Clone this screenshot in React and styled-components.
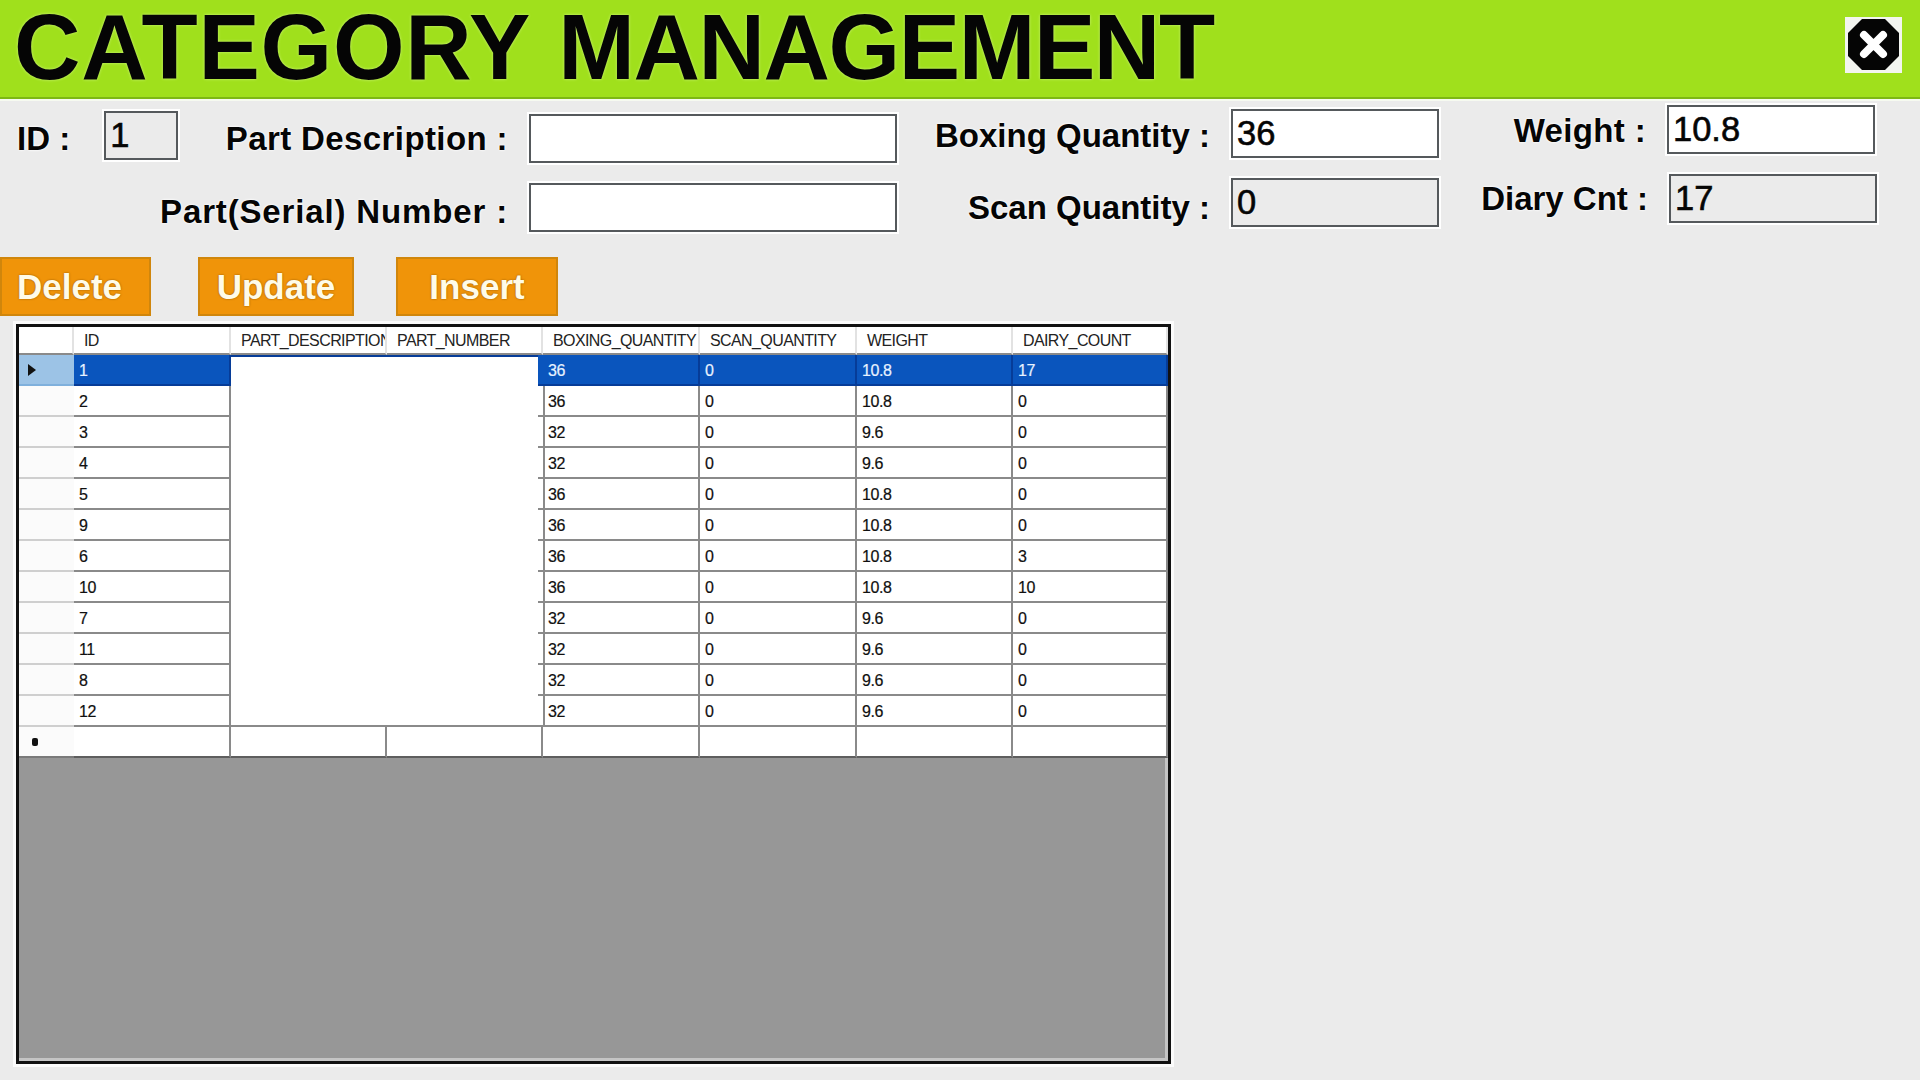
import React from "react";
import styled, { createGlobalStyle } from "styled-components";

const fullColumns = "55px 157px 156px 156px 157px 157px 156px 155px";
const dataColumns = "55px 157px 307px 162px 157px 156px 155px";

const rows = [
    [1, 36, 0, "10.8", 17],
    [2, 36, 0, "10.8", 0],
    [3, 32, 0, "9.6", 0],
    [4, 32, 0, "9.6", 0],
    [5, 36, 0, "10.8", 0],
    [9, 36, 0, "10.8", 0],
    [6, 36, 0, "10.8", 3],
    [10, 36, 0, "10.8", 10],
    [7, 32, 0, "9.6", 0],
    [11, 32, 0, "9.6", 0],
    [8, 32, 0, "9.6", 0],
    [12, 32, 0, "9.6", 0]
];

const columnTitles = [
    "ID",
    "PART_DESCRIPTION",
    "PART_NUMBER",
    "BOXING_QUANTITY",
    "SCAN_QUANTITY",
    "WEIGHT",
    "DAIRY_COUNT"
];

const GlobalStyle = createGlobalStyle`
    html, body {
        margin: 0;
        padding: 0;
        background: #ebebeb;
        overflow: hidden;
    }
    * {
        box-sizing: border-box;
    }
`;

const Page = styled.div`
    width: 1920px;
    height: 1080px;
    display: flex;
    flex-direction: column;
    background: #ebebeb;
    font-family: "Liberation Sans", Arial, sans-serif;
    color: #050505;
`;

const TitleBar = styled.header`
    height: 99px;
    flex-shrink: 0;
    display: flex;
    align-items: flex-start;
    justify-content: space-between;
    background: #a0e01c;
    border-bottom: 2px solid #7db814;
    box-shadow: 0 2px 0 #f6faf0;
    padding: 0 18px 0 14px;
`;

const Title = styled.h1`
    margin: 0;
    font-size: 92px;
    line-height: 94px;
    font-weight: 700;
    word-spacing: 1.5px;
    white-space: nowrap;
    color: #050505;
    text-shadow: 0 0 3px #cdf57e;
`;

const TitleWord = styled.span`
    letter-spacing: ${props => props.$spacing}px;
`;

const CloseButton = styled.button`
    width: 57px;
    height: 56px;
    margin-top: 17px;
    padding: 0;
    border: 0;
    display: block;
    background: #f3f5f0;
    svg {
        display: block;
    }
`;

const Form = styled.section`
    display: flex;
    height: 158px;
    flex-shrink: 0;
`;

const FieldColumn = styled.div`
    width: ${props => props.$width}px;
    padding-top: ${props => props.$top}px;
    display: flex;
    flex-direction: column;
    gap: 20px;
`;

const Field = styled.div`
    height: 49px;
    display: flex;
    align-items: center;
    justify-content: flex-end;
    gap: 21px;
    padding-right: ${props => props.$inset || 0}px;
`;

const Label = styled.label`
    font-size: 33px;
    font-weight: 700;
    white-space: nowrap;
    letter-spacing: ${props => props.$spacing || 0}px;
    margin-top: ${props => (props.$drop || 0) * 2}px;
    margin-left: ${props => props.$left || 0}px;
    text-shadow: 0 0 3px #ffffff, 0 0 2px #ffffff;
`;

const IdGroup = styled.div`
    display: flex;
    align-items: center;
    gap: 34px;
    margin-right: auto;
`;

const TextBox = styled.div`
    width: ${props => props.$width}px;
    height: 49px;
    flex-shrink: 0;
    display: flex;
    align-items: center;
    margin-top: ${props => (props.$lift || 0) * -2}px;
    padding-left: 4px;
    font-size: 34.5px;
    -webkit-text-stroke: 0.6px #050505;
    background: ${props => (props.$readOnly ? "#ebebeb" : "#ffffff")};
    border: 2px solid #55595c;
    box-shadow: 0 0 0 2px #ffffff;
`;

const ButtonRow = styled.div`
    height: 59px;
    flex-shrink: 0;
    display: flex;
`;

const ActionButton = styled.button`
    width: ${props => props.$width}px;
    margin-right: ${props => props.$after || 0}px;
    padding: 0 ${props => props.$pad || 0}px 0 0;
    border: 2px solid #d0860c;
    background: #f09409;
    color: #fffbe8;
    font-family: inherit;
    font-size: 35px;
    font-weight: 700;
    text-shadow: 0 0 2px #8a5200;
`;

const Grid = styled.div`
    width: 1155px;
    height: 740px;
    margin: 8px 0 0 16px;
    display: flex;
    flex-direction: column;
    background: #979797;
    border: 3px solid #111111;
    box-shadow: 0 0 0 3px #fbfbfb, inset -3px -3px 0 #c4c4c4;
`;

const GridRow = styled.div`
    display: grid;
    flex-shrink: 0;
    height: ${props => props.$height || 31}px;
    grid-template-columns: ${props => (props.$blank ? dataColumns : fullColumns)};
    background: #ffffff;
    font-size: 16px;
`;

const ColumnHead = styled.div`
    padding: 5px 0 0 ${props => (props.$corner ? 0 : 10)}px;
    overflow: hidden;
    white-space: nowrap;
    letter-spacing: -0.6px;
    color: #222222;
    border-right: 2px solid #e2e2e2;
    border-bottom: 2px solid #8a8a8a;
`;

const RowHead = styled.div`
    display: flex;
    align-items: center;
    padding-left: 8px;
    background: ${props => (props.$selected ? "#9cc3e6" : "#fbfbfb")};
    border-bottom: 2px solid ${props => (props.$selected ? "#7fb0dc" : "#cfcfcf")};
`;

const Dot = styled.span`
    width: 6px;
    height: 8px;
    margin-left: 5px;
    border-radius: 2px;
    background: #111111;
`;

const Cell = styled.div`
    position: relative;
    display: flex;
    align-items: center;
    padding: 2px 0 0 ${props => (props.$bleed ? 10 : 5)}px;
    letter-spacing: -0.4px;
    -webkit-text-stroke: 0.2px currentColor;
    color: ${props => (props.$selected ? "#e8f2ff" : "#101010")};
    background: ${props => (props.$selected ? "#0a55bd" : "#ffffff")};
    border-bottom: 2px solid ${props => (props.$selected ? "#063c98" : "#8a8a8a")};
    border-right: 2px solid ${props => (props.$selected ? "#063c98" : "#8a8a8a")};
    &::before {
        content: ${props => (props.$bleed && !props.$selected ? '""' : "none")};
        position: absolute;
        left: 5px;
        top: 0;
        bottom: -2px;
        width: 2px;
        background: #8a8a8a;
    }
`;

const BlankCell = styled.div`
    background: #ffffff;
    border-top: ${props => (props.$selected ? "2px solid #063c98" : "0")};
`;

const EmptyCell = styled.div`
    border-top: 2px solid #8a8a8a;
    border-right: 2px solid #8a8a8a;
    border-bottom: 2px solid #5e5e5e;
    margin-top: -2px;
`;

const NewRowHead = styled(RowHead)`
    border-bottom: 2px solid #7a7a7a;
`;

function CloseIcon() {
    return (
        <svg width="57" height="56" viewBox="0 0 57 56">
            <polygon
                points="17,2 40,2 54,16 54,39 40,53 17,53 3,39 3,16"
                fill="#050505"
            />
            <path
                d="M19 18 L38 37 M38 18 L19 37"
                stroke="#ffffff"
                strokeWidth="8"
                strokeLinecap="round"
            />
        </svg>
    );
}

function RowArrow() {
    return (
        <svg width="10" height="14" viewBox="0 0 10 14">
            <path d="M1 1 L9 7 L1 13 Z" fill="#111111" />
        </svg>
    );
}

const App = () => (
    <Page>
        <GlobalStyle />
        <TitleBar>
            <Title>
                <TitleWord $spacing={0.75}>CATEGORY</TitleWord>{" "}
                <TitleWord $spacing={-1.4}>MANAGEMENT</TitleWord>
            </Title>
            <CloseButton aria-label="Close">
                <CloseIcon />
            </CloseButton>
        </TitleBar>
        <Form>
            <FieldColumn $width={897} $top={15}>
                <Field>
                    <IdGroup>
                        <Label $left={17}>ID :</Label>
                        <TextBox $width={74} $lift={3} $readOnly>
                            1
                        </TextBox>
                    </IdGroup>
                    <Label $spacing={0.4}>Part Description :</Label>
                    <TextBox $width={368} />
                </Field>
                <Field>
                    <Label $spacing={0.85} $drop={4}>
                        Part(Serial) Number :
                    </Label>
                    <TextBox $width={368} />
                </Field>
            </FieldColumn>
            <FieldColumn $width={542} $top={10}>
                <Field>
                    <Label $drop={2}>Boxing Quantity :</Label>
                    <TextBox $width={208}>36</TextBox>
                </Field>
                <Field>
                    <Label $drop={5}>Scan Quantity :</Label>
                    <TextBox $width={208} $readOnly>
                        0
                    </TextBox>
                </Field>
            </FieldColumn>
            <FieldColumn $width={438} $top={6}>
                <Field $inset={2}>
                    <Label $spacing={0.35} $drop={1}>
                        Weight :
                    </Label>
                    <TextBox $width={208}>10.8</TextBox>
                </Field>
                <Field>
                    <Label>Diary Cnt :</Label>
                    <TextBox $width={208} $readOnly>
                        17
                    </TextBox>
                </Field>
            </FieldColumn>
        </Form>
        <ButtonRow>
            <ActionButton $width={151} $after={47} $pad={12}>
                Delete
            </ActionButton>
            <ActionButton $width={156} $after={42}>
                Update
            </ActionButton>
            <ActionButton $width={162}>Insert</ActionButton>
        </ButtonRow>
        <Grid>
            <GridRow $height={28}>
                <ColumnHead $corner />
                {columnTitles.map(title => (
                    <ColumnHead key={title}>{title}</ColumnHead>
                ))}
            </GridRow>
            {rows.map(([id, boxing, scan, weight, diary], index) => {
                const selected = index === 0;
                return (
                    <GridRow key={id} $blank>
                        <RowHead $selected={selected}>
                            {selected && <RowArrow />}
                        </RowHead>
                        <Cell $selected={selected}>{id}</Cell>
                        <BlankCell $selected={selected} />
                        <Cell $selected={selected} $bleed>
                            {boxing}
                        </Cell>
                        <Cell $selected={selected}>{scan}</Cell>
                        <Cell $selected={selected}>{weight}</Cell>
                        <Cell $selected={selected}>{diary}</Cell>
                    </GridRow>
                );
            })}
            <GridRow>
                <NewRowHead>
                    <Dot />
                </NewRowHead>
                {columnTitles.map(title => (
                    <EmptyCell key={title} />
                ))}
            </GridRow>
        </Grid>
    </Page>
);

export default App;
